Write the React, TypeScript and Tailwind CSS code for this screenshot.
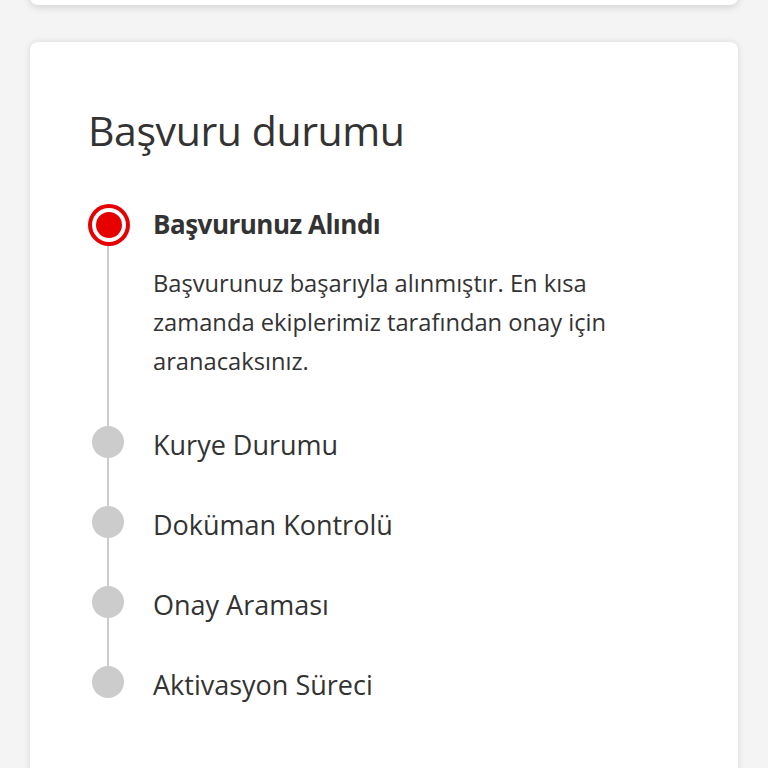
import React from 'react';

const steps = ['Kurye Durumu', 'Doküman Kontrolü', 'Onay Araması', 'Aktivasyon Süreci'];

export default function App() {
  return (
    <div className="h-[768px] w-[768px] overflow-hidden bg-[#f4f4f4] font-['Open_Sans',sans-serif] text-[#333333]">
      <div className="mx-[30px] -mt-[20px] h-[25px] rounded-b-lg bg-white shadow-[0_2px_8px_rgba(0,0,0,0.15)]" />
      <div className="mx-[30px] mt-[37px] h-[760px] rounded-lg bg-white px-[58px] pt-[58px] shadow-[0_0_6px_rgba(0,0,0,0.12)]">
        <h1 className="text-[41px] leading-[60px] tracking-[-0.4px]">Başvuru durumu</h1>

        <div className="relative mt-[44px]">
          <div className="absolute left-[19px] top-[40px] h-[436px] w-[2px] bg-[#cccccc]" />

          <div className="relative flex gap-[23px]">
            <div className="flex h-[42px] w-[42px] shrink-0 items-center justify-center rounded-full bg-[#e60000]">
              <div className="flex h-[34px] w-[34px] items-center justify-center rounded-full bg-white">
                <div className="h-[26px] w-[26px] rounded-full bg-[#e60000]" />
              </div>
            </div>
            <div className="pt-[2px]">
              <div className="text-[26px] font-bold leading-[36px] tracking-[-0.5px]">Başvurunuz Alındı</div>
              <p className="mt-[22px] text-[23.7px] leading-[39px]">
                Başvurunuz başarıyla alınmıştır. En kısa
                <br />
                zamanda ekiplerimiz tarafından onay için
                <br />
                aranacaksınız.
              </p>
            </div>
          </div>

          <div className="mt-[42px] flex flex-col gap-[42px]">
            {steps.map((s) => (
              <div key={s} className="relative flex items-center gap-[29px] pl-[4px]">
                <div className="h-[32px] w-[32px] shrink-0 rounded-full bg-[#cccccc]" />
                <div className="pt-[6px] text-[27px] leading-[32px]">{s}</div>
              </div>
            ))}
          </div>
        </div>
      </div>
    </div>
  );
}
